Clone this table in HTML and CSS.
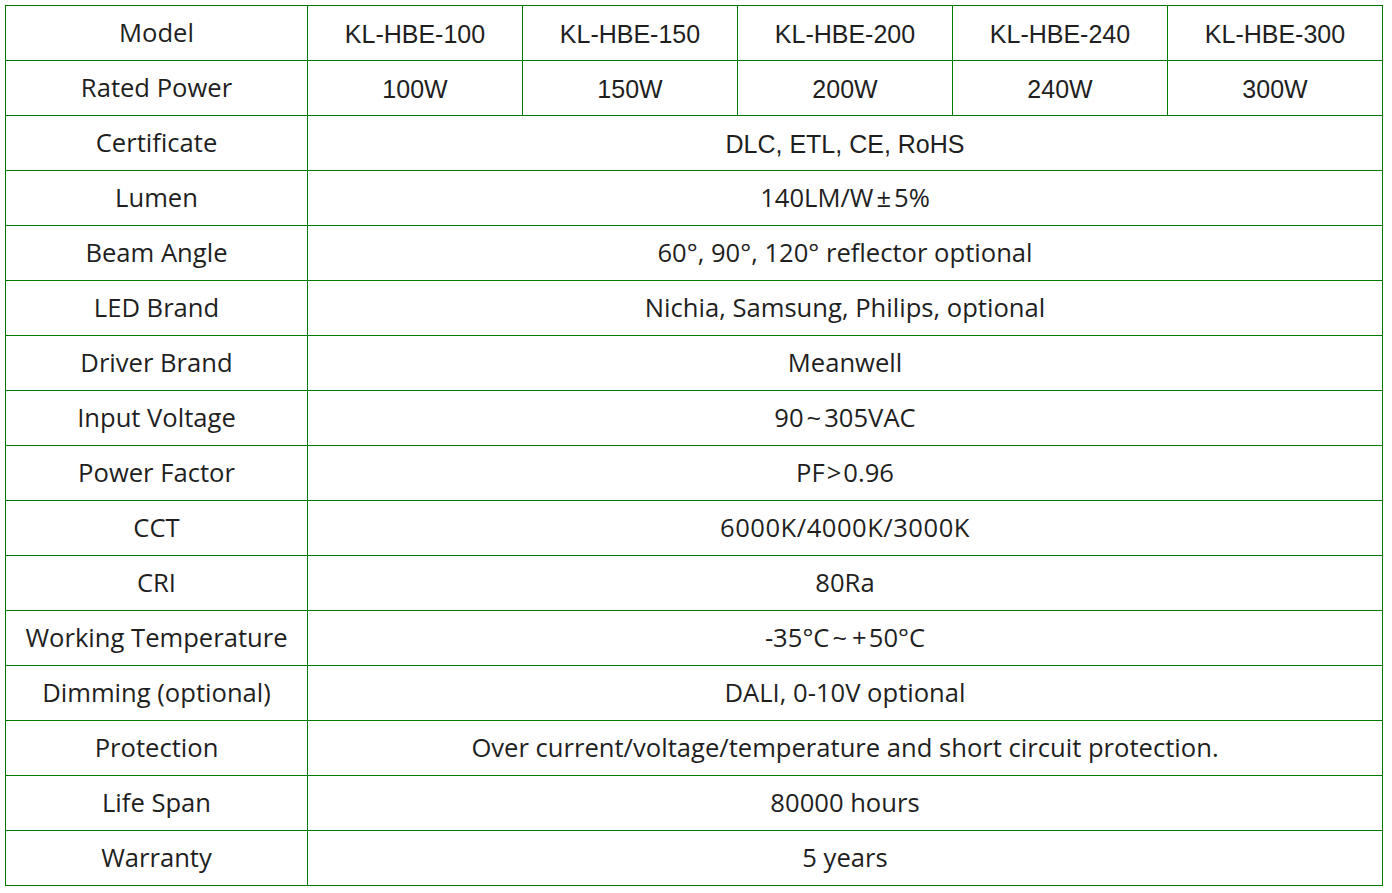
FILE: index.html
```html
<!DOCTYPE html>
<html>
<head>
<meta charset="utf-8">
<link rel="stylesheet" href="styles.css">
</head>
<body>
<table class="spec">
  <colgroup>
    <col class="c-label">
    <col class="c-model"><col class="c-model"><col class="c-model"><col class="c-model"><col class="c-model">
  </colgroup>
  <tr><td>Model</td><td class="arial">KL-HBE-100</td><td class="arial">KL-HBE-150</td><td class="arial">KL-HBE-200</td><td class="arial">KL-HBE-240</td><td class="arial">KL-HBE-300</td></tr>
  <tr><td>Rated Power</td><td class="arial">100W</td><td class="arial">150W</td><td class="arial">200W</td><td class="arial">240W</td><td class="arial">300W</td></tr>
  <tr><td>Certificate</td><td colspan="5" class="arial">DLC, ETL, CE, RoHS</td></tr>
  <tr><td>Lumen</td><td colspan="5">140LM/W<span class="sym">±</span>5%</td></tr>
  <tr><td>Beam Angle</td><td colspan="5">60°, 90°, 120° reflector optional</td></tr>
  <tr><td>LED Brand</td><td colspan="5">Nichia, Samsung, Philips, optional</td></tr>
  <tr><td>Driver Brand</td><td colspan="5">Meanwell</td></tr>
  <tr><td>Input Voltage</td><td colspan="5">90<span class="sym">~</span>305VAC</td></tr>
  <tr><td>Power Factor</td><td colspan="5">PF<span class="sym-sm">&gt;</span>0.96</td></tr>
  <tr><td>CCT</td><td colspan="5" class="wide">6000K/4000K/3000K</td></tr>
  <tr><td>CRI</td><td colspan="5">80Ra</td></tr>
  <tr><td>Working Temperature</td><td colspan="5">-35°C<span class="sym">~</span><span class="sym-sm">+</span>50°C</td></tr>
  <tr><td>Dimming (optional)</td><td colspan="5">DALI, 0-10V optional</td></tr>
  <tr><td>Protection</td><td colspan="5">Over current/voltage/temperature and short circuit protection.</td></tr>
  <tr><td>Life Span</td><td colspan="5">80000 hours</td></tr>
  <tr><td>Warranty</td><td colspan="5">5 years</td></tr>
</table>
</body>
</html>
```
FILE: styles.css
```css
html, body {
  margin: 0;
  padding: 0;
  background: #ffffff;
}
body {
  padding: 5px;
}
.spec {
  border-collapse: collapse;
  table-layout: fixed;
  width: 1378px;
  font-family: "Open Sans", "Noto Sans", sans-serif;
  font-size: 25.6px;
  color: #1f1f1f;
}
.c-label { width: 302px; }
.c-model { width: 215px; }
.spec td {
  border: 1px solid #007a00;
  height: 55px;
  padding: 0;
  box-sizing: border-box;
  text-align: center;
  vertical-align: middle;
  white-space: nowrap;
  line-height: 1;
}
.spec td.arial {
  font-family: "Liberation Sans", Arial, sans-serif;
  font-size: 25px;
  padding: 2px 0 0;
}
.spec td.wide {
  letter-spacing: 0.5px;
}
.sym {
  margin: 0 3px;
}
.sym-sm {
  margin: 0 2px;
}
```
